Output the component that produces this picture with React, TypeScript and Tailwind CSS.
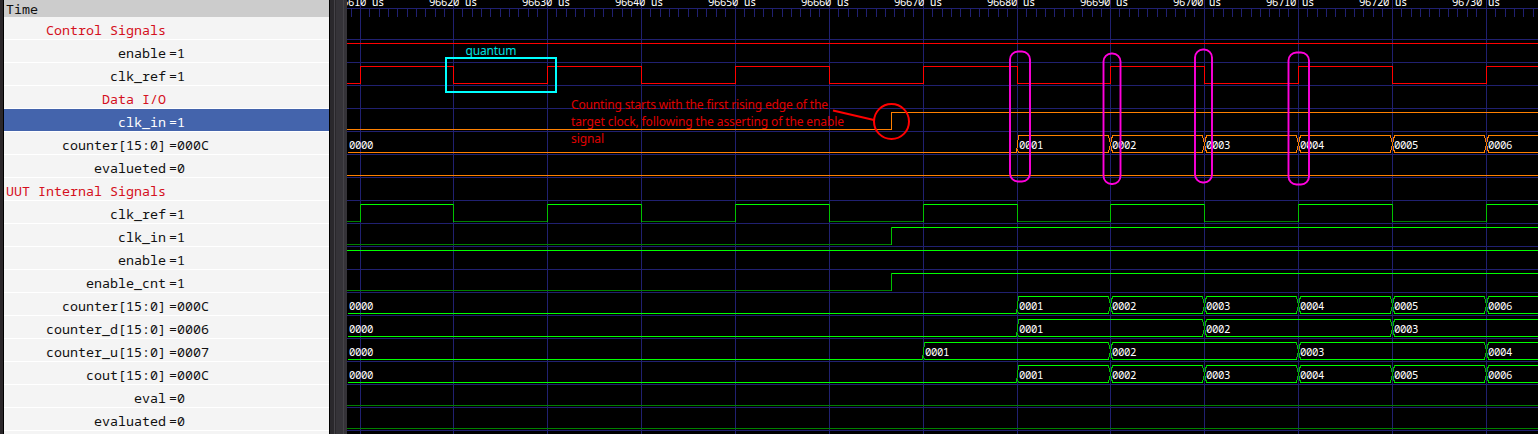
import React from "react";

const MONO = "font-['Noto_Sans_Mono','DejaVu_Sans_Mono',monospace]";

type Row = { name: string; value?: string; group?: boolean; selected?: boolean };

const ROWS: Row[] = [
  { name: "Control Signals", group: true },
  { name: "enable", value: "=1" },
  { name: "clk_ref", value: "=1" },
  { name: "Data I/O", group: true },
  { name: "clk_in", value: "=1", selected: true },
  { name: "counter[15:0]", value: "=000C" },
  { name: "evalueted", value: "=0" },
  { name: "UUT Internal Signals", group: true },
  { name: "clk_ref", value: "=1" },
  { name: "clk_in", value: "=1" },
  { name: "enable", value: "=1" },
  { name: "enable_cnt", value: "=1" },
  { name: "counter[15:0]", value: "=000C" },
  { name: "counter_d[15:0]", value: "=0006" },
  { name: "counter_u[15:0]", value: "=0007" },
  { name: "cout[15:0]", value: "=000C" },
  { name: "eval", value: "=0" },
  { name: "evaluated", value: "=0" },
];

// Time axis: one grid line every 10 us, in window coordinates.
const LEFT = 347;
const RIGHT = 1538;
const GRID = [360, 453, 547, 641, 735, 829, 923, 1017, 1110, 1204, 1298, 1392, 1486];
const ROW_H = 23;
const top = (row: number) => 16 + ROW_H * row;

const TICKS: number[] = [351];
GRID.forEach((g) => {
  for (let k = 1; k < 10; k++) {
    const x = Math.floor(g + 0.3 + 9.383 * k);
    if (x < RIGHT) TICKS.push(x);
  }
});

type Palette = { high: string; low: string; edge: string };
const RED: Palette = { high: "#ff0000", low: "#ff0000", edge: "#ff0000" };
const ORANGE: Palette = { high: "#ff8000", low: "#ff8000", edge: "#ff8000" };
const GREEN: Palette = { high: "#00ff00", low: "#008000", edge: "#00c000" };

const H = ({ x1, x2, y, c }: { x1: number; x2: number; y: number; c: string }) => (
  <rect x={x1} y={y} width={x2 - x1} height={1} fill={c} />
);
const V = ({ x, y1, y2, c }: { x: number; y1: number; y2: number; c: string }) => (
  <rect x={x} y={y1} width={1} height={y2 - y1} fill={c} />
);

function Bit({ row, start, edges, p }: { row: number; start: 0 | 1; edges: number[]; p: Palette }) {
  const hi = top(row) + 4;
  const lo = top(row) + 21;
  const stops = [LEFT, ...edges, RIGHT];
  return (
    <g>
      {stops.slice(0, -1).map((x, i) => {
        const on = (start + i) % 2 === 1;
        return <H key={x} x1={x} x2={stops[i + 1]} y={on ? hi : lo} c={on ? p.high : p.low} />;
      })}
      {edges.map((x) => (
        <V key={x} x={x} y1={hi} y2={lo + 1} c={p.edge} />
      ))}
    </g>
  );
}

function Bus({ row, edges, p }: { row: number; edges: number[]; p: Palette }) {
  const hi = top(row) + 4;
  const lo = top(row) + 21;
  const [first, ...rest] = edges;
  const stops = [first, ...rest, RIGHT + 4];
  return (
    <g>
      <H x1={LEFT + 1} x2={first - 1} y={lo} c={p.high} />
      {edges.map((x, i) => {
        const x1 = i === 0 ? x + 1 : x + 2;
        const x2 = stops[i + 1] - 1;
        return (
          <g key={x}>
            <H x1={x1} x2={x2} y={hi} c={p.high} />
            <H x1={x1} x2={x2} y={lo} c={p.high} />
          </g>
        );
      })}
      <path
        d={
          `M${first - 0.5} ${lo + 0.9}L${first + 1.5} ${hi + 0.5}M${first + 0.5} ${lo - 3}L${first + 1.5} ${lo + 0.9}` +
          rest
            .map((x) => `M${x - 1.5} ${hi + 0.5}L${x + 2.5} ${lo + 0.5}M${x + 2.5} ${hi + 0.5}L${x - 1.5} ${lo + 0.5}`)
            .join("")
        }
        stroke={p.edge}
        fill="none"
      />
    </g>
  );
}

function BusLabels({ row, edges }: { row: number; edges: number[] }) {
  return (
    <>
      {[LEFT, ...edges].map((x, i) => (
        <text key={x} x={x + 2} y={top(row) + 18}>
          {String(i).padStart(4, "0")}
        </text>
      ))}
    </>
  );
}

const CLK = GRID;
const COUNT = GRID.slice(7);
const COUNT_D = [1017, 1204, 1392];
const COUNT_U = [923, 1110, 1298, 1486];
const RISE = 891;

const PILLS = [
  [1010, 51.5, 20, 130],
  [1103.5, 53.5, 17, 130.5],
  [1195, 49.5, 17, 133],
  [1288.5, 52.5, 20.5, 132],
];

function Waves() {
  return (
    <svg
      className="block shrink-0 bg-black"
      width={RIGHT - LEFT}
      height={434}
      viewBox={`${LEFT} 0 ${RIGHT - LEFT} 434`}
    >
      <g shapeRendering="crispEdges">
        <H x1={LEFT} x2={RIGHT} y={8} c="#202070" />
        {ROWS.map((_, i) => (
          <H key={i} x1={LEFT} x2={RIGHT} y={top(i + 1)} c="#202070" />
        ))}
        {GRID.map((x) => (
          <V key={x} x={x} y1={0} y2={434} c="#202070" />
        ))}
        {TICKS.map((x) => (
          <V key={x} x={x} y1={9} y2={17} c="#202070" />
        ))}
        <Bit row={1} start={1} edges={[]} p={RED} />
        <Bit row={2} start={0} edges={CLK} p={RED} />
        <Bit row={4} start={0} edges={[RISE]} p={ORANGE} />
        <Bus row={5} edges={COUNT} p={ORANGE} />
        <Bit row={6} start={0} edges={[]} p={ORANGE} />
        <Bit row={8} start={0} edges={CLK} p={GREEN} />
        <Bit row={9} start={0} edges={[RISE]} p={GREEN} />
        <Bit row={10} start={1} edges={[]} p={GREEN} />
        <Bit row={11} start={0} edges={[RISE]} p={GREEN} />
        <Bus row={12} edges={COUNT} p={GREEN} />
        <Bus row={13} edges={COUNT_D} p={GREEN} />
        <Bus row={14} edges={COUNT_U} p={GREEN} />
        <Bus row={15} edges={COUNT} p={GREEN} />
        <Bit row={16} start={0} edges={[]} p={GREEN} />
        <Bit row={17} start={0} edges={[]} p={GREEN} />
      </g>

      <g className={`${MONO} text-[10.67px] tracking-[-0.402px]`} fill="#ffffff">
        {GRID.map((x, i) => (
          <text key={x} x={336 + 93 * i} y={6}>
            {`${96610 + i * 10} us`}
          </text>
        ))}
        <BusLabels row={5} edges={COUNT} />
        <BusLabels row={12} edges={COUNT} />
        <BusLabels row={13} edges={COUNT_D} />
        <BusLabels row={14} edges={COUNT_U} />
        <BusLabels row={15} edges={COUNT} />
      </g>

      <g className="font-['Noto_Sans',sans-serif] text-[12px]">
        <text x={465.5} y={55} fill="#00e0e0" textLength={51}>quantum</text>
        <g fill="#e00000">
          <text x={571} y={109} textLength={257}>Counting starts with the first rising edge of the</text>
          <text x={571} y={126} textLength={273}>target clock, following the asserting of the enable</text>
          <text x={571} y={143} textLength={33}>signal</text>
        </g>
      </g>
      <g fill="none" strokeWidth={2}>
        <rect x={446} y={58} width={110} height={34} stroke="#00ffff" />
        <path d="M833 110.5L874 120" stroke="#ff0000" />
        <circle cx={891.5} cy={121.5} r={17.5} stroke="#ff0000" />
        {PILLS.map(([x, y, w, h]) => (
          <rect key={x} x={x} y={y} width={w} height={h} rx={8} stroke="#ff00dc" strokeWidth={1.9} />
        ))}
      </g>
    </svg>
  );
}

function SignalRow({ row }: { row: Row }) {
  const tone = row.group
    ? "bg-[#f4f4f4] text-[#d40f20]"
    : row.selected
      ? "bg-[#4464ac] text-white"
      : "bg-[#f4f4f4] text-[#101010]";
  return (
    <div className={`flex h-[23px] shrink-0 items-start border-b border-white whitespace-pre pt-[3px] leading-[21px] ${tone}`}>
      <span className="w-[162px] shrink-0 text-right">{row.name}</span>
      <span className="pl-[3px]">{row.value}</span>
    </div>
  );
}

export default function App() {
  return (
    <div className="flex h-[434px] w-[1538px] overflow-hidden bg-black">
      <div className="w-[3px] shrink-0 bg-[#2b272a]" />
      <div className={`ml-px flex w-[325px] shrink-0 flex-col overflow-hidden bg-[#f4f4f4] text-[13.333px] ${MONO}`}>
        <div className="h-[17px] shrink-0 bg-[#cccccc] pl-[2px] leading-[19px] text-[#101010]">Time</div>
        <div className="h-px shrink-0 bg-white" />
        <div className="-mt-px flex shrink-0 flex-col">
          {ROWS.map((row, i) => (
            <SignalRow key={i} row={row} />
          ))}
        </div>
      </div>
      <div className="ml-px flex w-[17px] shrink-0 bg-[#353338]">
        <div className="w-1 bg-[#2a282c]" />
        <div className="w-px bg-[#454348]" />
        <div className="w-px bg-[#2a282c]" />
        <div className="ml-[7px] w-px bg-[#454348]" />
      </div>
      <Waves />
    </div>
  );
}
